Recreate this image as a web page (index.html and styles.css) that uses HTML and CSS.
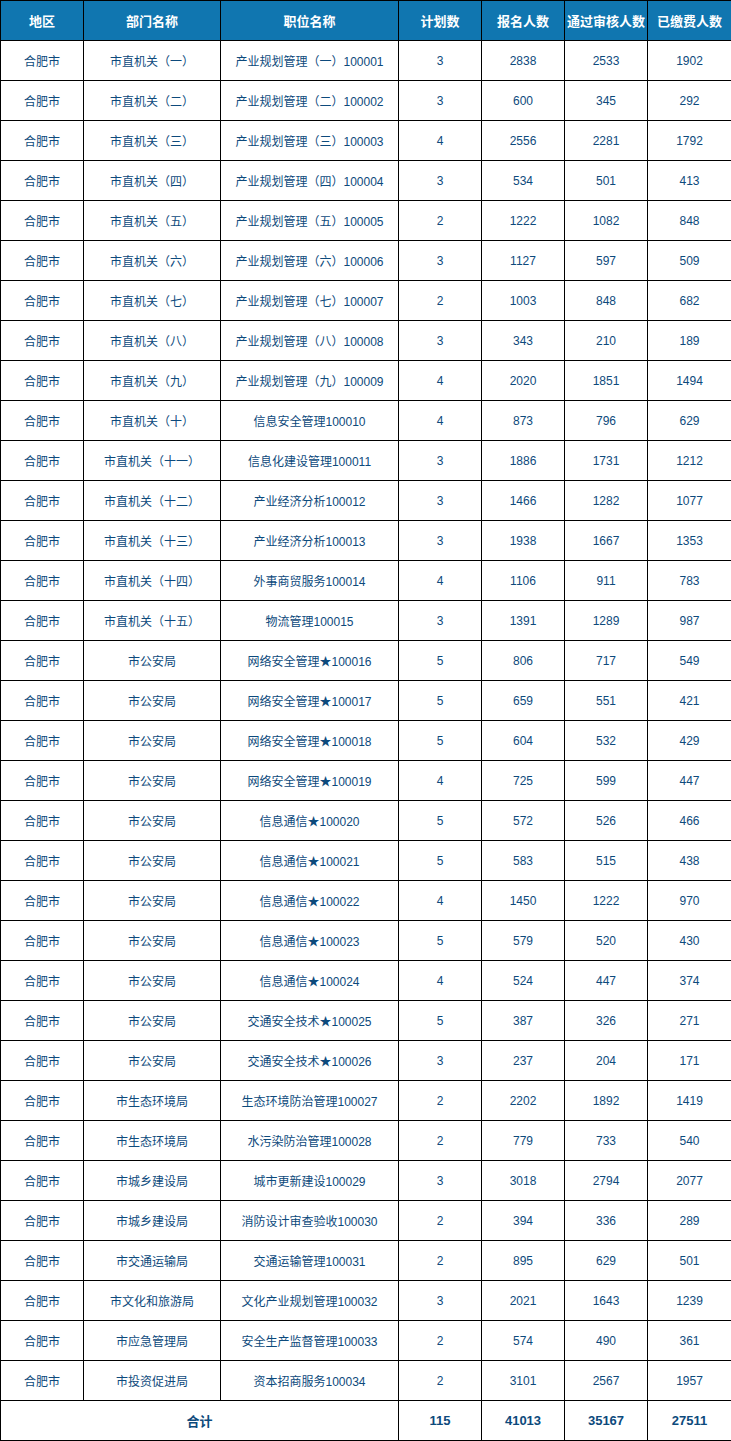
FILE: index.html
```html
<!DOCTYPE html>
<html lang="zh">
<head>
<meta charset="utf-8">
<title>职位报名人数</title>
<link rel="stylesheet" href="styles.css">
</head>
<body>
<table class="stats">
<colgroup>
<col class="c1"><col class="c2"><col class="c3"><col class="c4"><col class="c5"><col class="c6"><col class="c7">
</colgroup>
<thead>
<tr><th>地区</th><th>部门名称</th><th>职位名称</th><th>计划数</th><th>报名人数</th><th>通过审核人数</th><th>已缴费人数</th></tr>
</thead>
<tbody>
<tr><td>合肥市</td><td>市直机关（一）</td><td>产业规划管理（一）100001</td><td>3</td><td>2838</td><td>2533</td><td>1902</td></tr>
<tr><td>合肥市</td><td>市直机关（二）</td><td>产业规划管理（二）100002</td><td>3</td><td>600</td><td>345</td><td>292</td></tr>
<tr><td>合肥市</td><td>市直机关（三）</td><td>产业规划管理（三）100003</td><td>4</td><td>2556</td><td>2281</td><td>1792</td></tr>
<tr><td>合肥市</td><td>市直机关（四）</td><td>产业规划管理（四）100004</td><td>3</td><td>534</td><td>501</td><td>413</td></tr>
<tr><td>合肥市</td><td>市直机关（五）</td><td>产业规划管理（五）100005</td><td>2</td><td>1222</td><td>1082</td><td>848</td></tr>
<tr><td>合肥市</td><td>市直机关（六）</td><td>产业规划管理（六）100006</td><td>3</td><td>1127</td><td>597</td><td>509</td></tr>
<tr><td>合肥市</td><td>市直机关（七）</td><td>产业规划管理（七）100007</td><td>2</td><td>1003</td><td>848</td><td>682</td></tr>
<tr><td>合肥市</td><td>市直机关（八）</td><td>产业规划管理（八）100008</td><td>3</td><td>343</td><td>210</td><td>189</td></tr>
<tr><td>合肥市</td><td>市直机关（九）</td><td>产业规划管理（九）100009</td><td>4</td><td>2020</td><td>1851</td><td>1494</td></tr>
<tr><td>合肥市</td><td>市直机关（十）</td><td>信息安全管理100010</td><td>4</td><td>873</td><td>796</td><td>629</td></tr>
<tr><td>合肥市</td><td>市直机关（十一）</td><td>信息化建设管理100011</td><td>3</td><td>1886</td><td>1731</td><td>1212</td></tr>
<tr><td>合肥市</td><td>市直机关（十二）</td><td>产业经济分析100012</td><td>3</td><td>1466</td><td>1282</td><td>1077</td></tr>
<tr><td>合肥市</td><td>市直机关（十三）</td><td>产业经济分析100013</td><td>3</td><td>1938</td><td>1667</td><td>1353</td></tr>
<tr><td>合肥市</td><td>市直机关（十四）</td><td>外事商贸服务100014</td><td>4</td><td>1106</td><td>911</td><td>783</td></tr>
<tr><td>合肥市</td><td>市直机关（十五）</td><td>物流管理100015</td><td>3</td><td>1391</td><td>1289</td><td>987</td></tr>
<tr><td>合肥市</td><td>市公安局</td><td>网络安全管理★100016</td><td>5</td><td>806</td><td>717</td><td>549</td></tr>
<tr><td>合肥市</td><td>市公安局</td><td>网络安全管理★100017</td><td>5</td><td>659</td><td>551</td><td>421</td></tr>
<tr><td>合肥市</td><td>市公安局</td><td>网络安全管理★100018</td><td>5</td><td>604</td><td>532</td><td>429</td></tr>
<tr><td>合肥市</td><td>市公安局</td><td>网络安全管理★100019</td><td>4</td><td>725</td><td>599</td><td>447</td></tr>
<tr><td>合肥市</td><td>市公安局</td><td>信息通信★100020</td><td>5</td><td>572</td><td>526</td><td>466</td></tr>
<tr><td>合肥市</td><td>市公安局</td><td>信息通信★100021</td><td>5</td><td>583</td><td>515</td><td>438</td></tr>
<tr><td>合肥市</td><td>市公安局</td><td>信息通信★100022</td><td>4</td><td>1450</td><td>1222</td><td>970</td></tr>
<tr><td>合肥市</td><td>市公安局</td><td>信息通信★100023</td><td>5</td><td>579</td><td>520</td><td>430</td></tr>
<tr><td>合肥市</td><td>市公安局</td><td>信息通信★100024</td><td>4</td><td>524</td><td>447</td><td>374</td></tr>
<tr><td>合肥市</td><td>市公安局</td><td>交通安全技术★100025</td><td>5</td><td>387</td><td>326</td><td>271</td></tr>
<tr><td>合肥市</td><td>市公安局</td><td>交通安全技术★100026</td><td>3</td><td>237</td><td>204</td><td>171</td></tr>
<tr><td>合肥市</td><td>市生态环境局</td><td>生态环境防治管理100027</td><td>2</td><td>2202</td><td>1892</td><td>1419</td></tr>
<tr><td>合肥市</td><td>市生态环境局</td><td>水污染防治管理100028</td><td>2</td><td>779</td><td>733</td><td>540</td></tr>
<tr><td>合肥市</td><td>市城乡建设局</td><td>城市更新建设100029</td><td>3</td><td>3018</td><td>2794</td><td>2077</td></tr>
<tr><td>合肥市</td><td>市城乡建设局</td><td>消防设计审查验收100030</td><td>2</td><td>394</td><td>336</td><td>289</td></tr>
<tr><td>合肥市</td><td>市交通运输局</td><td>交通运输管理100031</td><td>2</td><td>895</td><td>629</td><td>501</td></tr>
<tr><td>合肥市</td><td>市文化和旅游局</td><td>文化产业规划管理100032</td><td>3</td><td>2021</td><td>1643</td><td>1239</td></tr>
<tr><td>合肥市</td><td>市应急管理局</td><td>安全生产监督管理100033</td><td>2</td><td>574</td><td>490</td><td>361</td></tr>
<tr><td>合肥市</td><td>市投资促进局</td><td>资本招商服务100034</td><td>2</td><td>3101</td><td>2567</td><td>1957</td></tr>
<tr class="total"><td colspan="3">合计</td><td>115</td><td>41013</td><td>35167</td><td>27511</td></tr>
</tbody>
</table>
</body>
</html>
```
FILE: styles.css
```css
html, body {
  margin: 0;
  padding: 0;
  background: #ffffff;
}
.stats {
  border-collapse: collapse;
  table-layout: fixed;
  width: 731px;
  font-family: "Liberation Sans", "Noto Sans CJK SC", sans-serif;
  font-size: 12px;
  color: #0d4a7c;
}
.c1 { width: 83px; }
.c2 { width: 137px; }
.c3 { width: 178px; }
.c4 { width: 83px; }
.c5 { width: 83px; }
.c6 { width: 83px; }
.c7 { width: 84px; }
.stats th, .stats td {
  border: 1px solid #000000;
  height: 40px;
  padding: 0;
  text-align: center;
  vertical-align: middle;
  white-space: nowrap;
  box-sizing: border-box;
}
.stats th {
  background: #1076b0;
  color: #ffffff;
  font-weight: bold;
  font-size: 13px;
}
.stats .total td {
  font-weight: bold;
  font-size: 13px;
}
```
